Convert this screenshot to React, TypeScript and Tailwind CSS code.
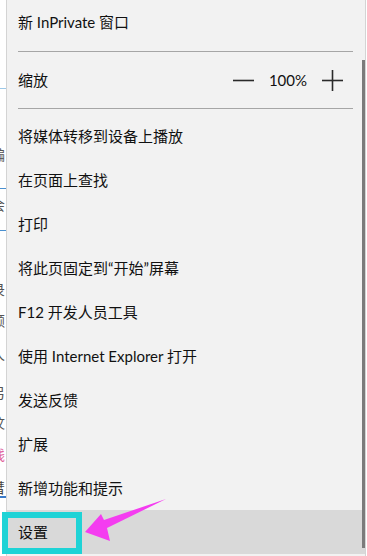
const items = [
  '将媒体转移到设备上播放',
  '在页面上查找',
  '打印',
  '将此页固定到“开始”屏幕',
  'F12 开发人员工具',
  '使用 Internet Explorer 打开',
  '发送反馈',
  '扩展',
  '新增功能和提示',
];

// bits of the page that peek out to the left of the menu
const fragments = [
  { top: 146, text: '骗', color: 'text-[#555]' },
  { top: 196, text: '会', color: 'text-[#555]' },
  { top: 281, text: '录', color: 'text-[#555]' },
  { top: 312, text: '颅', color: 'text-[#555]' },
  { top: 346, text: '人', color: 'text-[#555]' },
  { top: 384, text: '另', color: 'text-[#555]' },
  { top: 414, text: '汶', color: 'text-[#555]' },
  { top: 446, text: '钱', color: 'text-[#e0609a]' },
  { top: 479, text: '彗', color: 'text-[#444]' },
];

const Row = ({ children, active }: { children: React.ReactNode; active?: boolean }) => (
  <div
    className={`h-[44px] flex items-center pl-[11px] text-[15px] text-[#111] ${active ? 'bg-[#d9d9d9]' : ''}`}
  >
    {children}
  </div>
);

const App: React.FC = () => {
  return (
    <div className="relative w-[367px] h-[556px] overflow-hidden bg-white flex font-['Lato','Noto_Sans_CJK_SC',sans-serif]">
      {/* page behind the menu */}
      <div className="relative w-[6px] h-full overflow-hidden shrink-0">
        <div className="absolute left-0 top-[88px] w-full h-px bg-[#9cc8e8]" />
        <div className="absolute left-0 top-[188px] w-full h-px bg-[#4a90d0]" />
        <div className="absolute left-0 top-[230px] w-full h-px bg-[#4a90d0]" />
        <div className="absolute left-0 top-[496px] w-full h-[2px] bg-[#3a7ac8]" />
        {fragments.map((f) => (
          <span
            key={f.top}
            className={`absolute left-[-9px] text-[14px] leading-[18px] ${f.color}`}
            style={{ top: f.top }}
          >
            {f.text}
          </span>
        ))}
      </div>

      {/* menu */}
      <div className="w-[360px] h-full bg-[#f2f2f2] border-l border-r border-[#d4d4d4] flex flex-col shrink-0">
        <Row>新 InPrivate 窗口</Row>
        <div className="pt-[7px] pb-[6px]">
          <div className="ml-[11px] w-[335px] h-px bg-[#a6a6a6]" />
        </div>
        <div className="h-[44px] flex items-center justify-between pl-[11px] pr-[22px] text-[15px] text-[#111]">
          <span>缩放</span>
          <div className="flex items-center">
            <svg width="21" height="21" viewBox="0 0 21 21">
              <line x1="0" y1="10.5" x2="21" y2="10.5" stroke="#2a2a2a" strokeWidth="1.6" />
            </svg>
            <span className="mx-[15px] text-[15px]">100%</span>
            <svg width="21" height="21" viewBox="0 0 21 21">
              <line x1="0" y1="10.5" x2="21" y2="10.5" stroke="#2a2a2a" strokeWidth="1.6" />
              <line x1="10.5" y1="0" x2="10.5" y2="21" stroke="#2a2a2a" strokeWidth="1.6" />
            </svg>
          </div>
        </div>
        <div className="pt-[6px] pb-[5px]">
          <div className="ml-[11px] w-[335px] h-px bg-[#a6a6a6]" />
        </div>
        {items.map((item) => (
          <Row key={item}>{item}</Row>
        ))}
        <Row active>设置</Row>
      </div>

      {/* scrollbar */}
      <div className="absolute left-[362px] top-[60px] w-[3px] h-[488px] bg-[#7b7b7b]" />

      {/* annotation: highlight box + arrow */}
      <div className="absolute left-[2px] top-[512px] w-[80px] h-[42px] border-[6px] border-[#1fd3d6]" />
      <svg className="absolute left-0 top-0" width="367" height="556" viewBox="0 0 367 556">
        <polygon
          points="85,532 101,514 104,520 166,499 107,528 110,541"
          fill="#f43cf0"
        />
      </svg>
    </div>
  );
};

export default App;
